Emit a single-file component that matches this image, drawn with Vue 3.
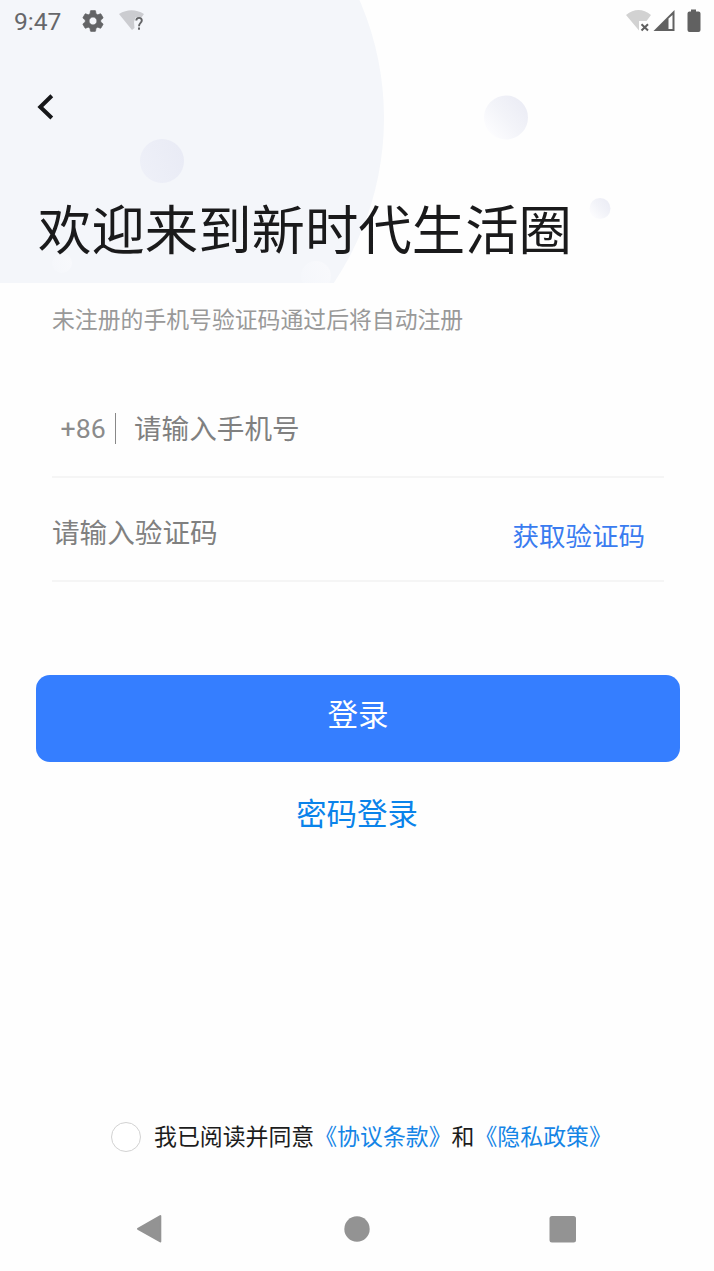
<template>
	<div class="page">
		<!-- Background bubbles -->
		<svg class="bubbles" width="714" height="283" viewBox="0 0 714 283">
			<defs>
				<linearGradient id="bubbleLeft" x1="1" y1="0.3" x2="0" y2="0.7">
					<stop offset="0" stop-color="#e9ebf5" />
					<stop offset="1" stop-color="#eef0f8" />
				</linearGradient>
				<linearGradient id="bubbleRight" x1="0.9" y1="0.1" x2="0.1" y2="0.8">
					<stop offset="0" stop-color="#ebecf5" />
					<stop offset="0.55" stop-color="#f3f4f9" />
					<stop offset="1" stop-color="#fcfcfe" />
				</linearGradient>
				<linearGradient id="bubbleFaint" x1="1" y1="0.3" x2="0" y2="0.7">
					<stop offset="0" stop-color="#f8f9fc" />
					<stop offset="1" stop-color="#f5f7fb" />
				</linearGradient>
			</defs>
			<circle cx="88" cy="118" r="296" fill="#f4f6fa" />
			<circle cx="162" cy="161" r="22" fill="url(#bubbleLeft)" />
			<circle cx="506" cy="117.5" r="22" fill="url(#bubbleRight)" />
			<circle cx="600" cy="208.5" r="10.5" fill="url(#bubbleRight)" />
			<circle cx="62" cy="263" r="10" fill="url(#bubbleFaint)" />
			<circle cx="316" cy="276" r="15" fill="url(#bubbleFaint)" />
		</svg>

		<!-- System status bar -->
		<header class="status-bar">
			<span class="time">9:47</span>
			<svg class="gear" width="26" height="26" viewBox="0 0 24 24">
				<path
					fill="#636466"
					stroke="#636466"
					stroke-width="0.6"
					d="M19.14 12.94c.04-.3.06-.61.06-.94 0-.32-.02-.64-.07-.94l2.03-1.58c.18-.14.23-.41.12-.61l-1.92-3.32c-.12-.22-.37-.29-.59-.22l-2.39.96c-.5-.38-1.03-.7-1.62-.94l-.36-2.54c-.04-.24-.24-.41-.48-.41h-3.84c-.24 0-.43.17-.47.41l-.36 2.54c-.59.24-1.13.57-1.62.94l-2.39-.96c-.22-.08-.47 0-.59.22L2.74 8.87c-.12.21-.08.47.12.61l2.03 1.58c-.05.3-.09.63-.09.94s.02.64.07.94l-2.03 1.58c-.18.14-.23.41-.12.61l1.92 3.32c.12.22.37.29.59.22l2.39-.96c.5.38 1.03.7 1.62.94l.36 2.54c.05.24.24.41.48.41h3.84c.24 0 .44-.17.47-.41l.36-2.54c.59-.24 1.13-.56 1.62-.94l2.39.96c.22.08.47 0 .59-.22l1.92-3.32c.12-.22.07-.47-.12-.61l-2.01-1.58zM12 15.6c-1.98 0-3.6-1.62-3.6-3.6s1.62-3.6 3.6-3.6 3.6 1.62 3.6 3.6-1.62 3.6-3.6 3.6z"
				/>
			</svg>
			<svg class="wifi-unknown" width="28" height="24" viewBox="0 0 28 24">
				<path fill="#cbccd0" d="M0 5Q12.500 -2.500 25 5L22.500 8.500H16.500L15 13L15.500 19L13 21Z" />
				<path
					fill="none"
					stroke="#636466"
					stroke-width="1.9"
					d="M17.300 11.600C17.300 7.900 22.800 8 22.800 11.500C22.800 14 20 14 20 17.200"
				/>
				<rect x="19" y="18.500" width="2" height="2.200" fill="#636466" />
			</svg>
			<div class="status-right">
				<svg width="78" height="26" viewBox="0 0 78 26">
					<path fill="#d2d2d2" d="M1 7Q13.500 -3 26 7L21.500 13H14V22.500Z" />
					<path fill="none" stroke="#5f5f5f" stroke-width="2" d="M16.500 16.200L23 22.500M23 16.200L16.500 22.500" />
					<path fill="#616161" fill-rule="evenodd" d="M28.500 23L49.500 2V23ZM43.500 10.500V21H47.500V7Z" />
					<path
						fill="#616161"
						d="M66 1.500H71V3.500H73.500Q75.500 3.500 75.500 5.500V22Q75.500 24 73.500 24H64.500Q62.500 24 62.500 22V5.500Q62.500 3.500 64.500 3.500H66Z"
					/>
				</svg>
			</div>
		</header>

		<button class="back" aria-label="返回">
			<svg width="18" height="28" viewBox="0 0 18 28">
				<path fill="none" stroke="#161719" stroke-width="4" d="M15.800 2.800L4.300 14L15.800 25" />
			</svg>
		</button>

		<h1 class="title">欢迎来到新时代生活圈</h1>
		<p class="subtitle">未注册的手机号验证码通过后将自动注册</p>

		<form class="form" @submit.prevent>
			<div class="field phone-field">
				<span class="prefix">+86</span>
				<input v-model="phone" class="input" type="tel" placeholder="请输入手机号" />
			</div>
			<div class="field code-field">
				<input v-model="code" class="input" type="text" placeholder="请输入验证码" />
				<button type="button" class="get-code">获取验证码</button>
			</div>
			<button type="submit" class="login">登录</button>
		</form>

		<button class="password-login">密码登录</button>

		<div class="agreement">
			<input v-model="agreed" class="check" type="checkbox" />
			<span>我已阅读并同意<a class="link">《协议条款》</a>和<a class="link">《隐私政策》</a></span>
		</div>

		<!-- System navigation -->
		<nav class="nav-bar">
			<svg width="28" height="32" viewBox="0 0 28 32">
				<path
					fill="#939393"
					stroke="#939393"
					stroke-width="2"
					stroke-linejoin="round"
					d="M2 15.800L24.300 3V28.500Z"
				/>
			</svg>
			<svg width="28" height="32" viewBox="0 0 28 32">
				<circle cx="14" cy="16" r="12.700" fill="#939393" />
			</svg>
			<svg width="28" height="32" viewBox="0 0 28 32">
				<rect x="0.500" y="3" width="26.500" height="26.500" rx="2.500" fill="#939393" />
			</svg>
		</nav>
	</div>
</template>

<script setup>
import { ref } from "vue";

const phone = ref("");
const code = ref("");
const agreed = ref(false);
</script>

<style>
body {
	margin: 0;
	background: #fefefe;
}
</style>

<style scoped>
.page {
	position: relative;
	display: flex;
	flex-direction: column;
	width: 714px;
	height: 1271px;
	overflow: hidden;
	box-sizing: border-box;
	background: #fefefe;
	font-family: "Noto Sans CJK SC", sans-serif;
}
.page > * {
	position: relative;
	flex-shrink: 0;
}
.page > .bubbles {
	position: absolute;
	top: 0;
	left: 0;
}
button {
	padding: 0;
	border: none;
	background: none;
	font-family: inherit;
}
svg {
	display: block;
}
.status-bar {
	display: flex;
	align-items: center;
	height: 42px;
	padding: 0 11px 0 14px;
}
.time {
	width: 65.5px;
	padding-top: 1px;
	font: 24.6px/42px Roboto, sans-serif;
	color: #66676a;
}
.wifi-unknown {
	margin-left: 13px;
}
.status-right {
	margin-left: auto;
}
.back {
	width: 18px;
	height: 28px;
	margin: 51px 0 0 36px;
}
.title {
	margin: 66px 0 0 38px;
	font-size: 53.4px;
	font-weight: 400;
	line-height: 80px;
	color: #1a1a1b;
}
.subtitle {
	margin: 35px 0 0 52px;
	font-size: 22.85px;
	line-height: 32px;
	color: #999;
}
.form {
	display: flex;
	flex-direction: column;
	margin-top: 43px;
}
.field {
	display: flex;
	align-items: center;
	box-sizing: border-box;
	margin: 0 50px 0 52px;
	border-bottom: 2px solid #f5f5f5;
}
.phone-field {
	height: 101px;
	padding-left: 8.5px;
}
.code-field {
	height: 104px;
	padding-right: 19px;
}
.prefix {
	width: 55.5px;
	height: 31px;
	box-sizing: border-box;
	margin: 4px 18px 0 0;
	border-right: 1px solid #888;
	font: 26.7px/32px Roboto, sans-serif;
	color: #8b8b8b;
}
.input {
	flex: 1;
	min-width: 0;
	height: 42px;
	padding: 0;
	border: none;
	outline: none;
	background: none;
	font-family: inherit;
	font-size: 27.6px;
}
.code-field .input {
	margin-top: 3px;
}
.input::placeholder {
	color: #808080;
	opacity: 1;
}
.get-code {
	margin-top: 11px;
	font-size: 26.5px;
	line-height: 40px;
	color: #3a7cf0;
}
.login {
	height: 87px;
	margin: 93px 34px 0 36px;
	padding-bottom: 12px;
	border-radius: 14px;
	background: #357eff;
	font-size: 30.5px;
	color: #fff;
}
.password-login {
	align-self: center;
	margin-top: 30px;
	font-size: 30.4px;
	line-height: 40px;
	color: #0a83ea;
}
.agreement {
	display: flex;
	align-items: center;
	margin: 283px 0 0 111px;
	font-size: 22.9px;
	line-height: 40px;
	color: #1c1c1c;
}
.check {
	appearance: none;
	width: 30px;
	height: 30px;
	margin: 4px 13px 0 0;
	border: 1px solid #d2d2d2;
	border-radius: 50%;
	background: #fff;
}
.link {
	color: #1585e6;
}
.nav-bar {
	display: flex;
	justify-content: space-between;
	margin: 58px 137px 0 136px;
}
</style>
